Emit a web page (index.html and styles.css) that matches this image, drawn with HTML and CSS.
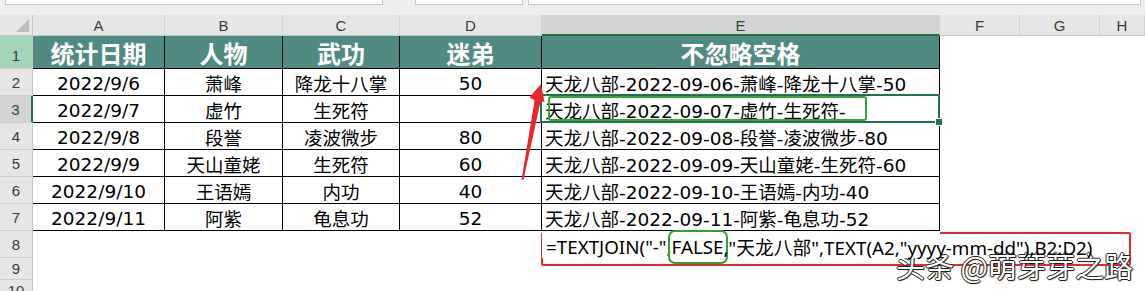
FILE: index.html
```html
<!DOCTYPE html>
<html lang="zh-CN">
<head>
<meta charset="utf-8">
<title>TEXTJOIN</title>
<link rel="stylesheet" href="styles.css">
</head>
<body>
<div class="screen">
  <div class="fbar">
    <div class="fbox namebox"></div>
    <div class="fbox fxbox"></div>
    <div class="fbox inputbox"></div>
  </div>
  <div class="sheet">
    <div class="corner"><span class="tri"></span></div>
    <div class="ch">A</div><div class="ch">B</div><div class="ch">C</div><div class="ch">D</div><div class="ch ch-sel">E</div><div class="ch">F</div><div class="ch">G</div><div class="ch">H</div>

    <div class="rh rh-hl">1</div>
    <div class="c hd">统计日期</div><div class="c hd">人物</div><div class="c hd">武功</div><div class="c hd">迷弟</div><div class="c hd">不忽略空格</div><div class="e"></div><div class="e"></div><div class="e"></div>

    <div class="rh">2</div>
    <div class="c">2022/9/6</div><div class="c">萧峰</div><div class="c">降龙十八掌</div><div class="c">50</div><div class="c l">天龙八部-2022-09-06-萧峰-降龙十八掌-50</div><div class="e"></div><div class="e"></div><div class="e"></div>

    <div class="rh rh-sel">3</div>
    <div class="c">2022/9/7</div><div class="c">虚竹</div><div class="c">生死符</div><div class="c"></div><div class="c l sel">天龙八部-2022-09-07-虚竹-生死符-</div><div class="e"></div><div class="e"></div><div class="e"></div>

    <div class="rh">4</div>
    <div class="c">2022/9/8</div><div class="c">段誉</div><div class="c">凌波微步</div><div class="c">80</div><div class="c l">天龙八部-2022-09-08-段誉-凌波微步-80</div><div class="e"></div><div class="e"></div><div class="e"></div>

    <div class="rh">5</div>
    <div class="c">2022/9/9</div><div class="c">天山童姥</div><div class="c">生死符</div><div class="c">60</div><div class="c l">天龙八部-2022-09-09-天山童姥-生死符-60</div><div class="e"></div><div class="e"></div><div class="e"></div>

    <div class="rh">6</div>
    <div class="c">2022/9/10</div><div class="c">王语嫣</div><div class="c">内功</div><div class="c">40</div><div class="c l">天龙八部-2022-09-10-王语嫣-内功-40</div><div class="e"></div><div class="e"></div><div class="e"></div>

    <div class="rh">7</div>
    <div class="c">2022/9/11</div><div class="c">阿紫</div><div class="c">龟息功</div><div class="c">52</div><div class="c l">天龙八部-2022-09-11-阿紫-龟息功-52</div><div class="e"></div><div class="e"></div><div class="e"></div>

    <div class="rh">8</div>
    <div class="e"></div><div class="e"></div><div class="e"></div><div class="e"></div><div class="e formula">=TEXTJOIN("-",<span class="mark">FALSE</span>,"天龙八部",TEXT(A2,"yyyy-mm-dd"),B2:D2)</div><div class="e"></div><div class="e"></div><div class="e"></div>

    <div class="rh rh-short">9</div>
    <div class="e"></div><div class="e"></div><div class="e"></div><div class="e"></div><div class="e"></div><div class="e"></div><div class="e"></div><div class="e"></div>

    <div class="rh rh-cut">10</div>
    <div class="e"></div><div class="e"></div><div class="e"></div><div class="e"></div><div class="e"></div><div class="e"></div><div class="e"></div><div class="e"></div>
  </div>

  <div class="note-green"></div>
  <div class="note-red"></div>
  <svg class="arrow" width="1145" height="291" viewBox="0 0 1145 291" aria-hidden="true">
    <polygon points="541,84 544.5,102 540.6,101.2 523.4,180 521.6,179.5 534.6,100 529.5,97.5" fill="#e8262b"/>
  </svg>
  <div class="watermark">头条 @萌芽芽之路</div>
</div>
</body>
</html>
```

FILE: styles.css
```css
* {
  box-sizing: border-box;
  margin: 0;
  padding: 0;
}

body {
  margin: 0;
  background: #ffffff;
  font-family: "DejaVu Sans", "Noto Sans CJK SC", sans-serif;
}

.screen {
  position: relative;
  width: 1145px;
  height: 291px;
  overflow: hidden;
  background: #ffffff;
}

/* formula bar strip */
.fbar {
  height: 15px;
  background: #eeeeee;
  display: flex;
  align-items: flex-start;
}

.fbox {
  height: 5px;
  background: #ffffff;
  border: 1px solid #c6c6c6;
  border-top: none;
}

.namebox {
  margin-left: 5px;
  width: 378px;
}

.fxbox {
  margin-left: 32px;
  width: 108px;
}

.inputbox {
  margin-left: 5px;
  width: 613px;
}

/* sheet grid */
.sheet {
  display: grid;
  grid-template-columns: 33px 132px 118px 117px 142px 398px 80px 80px 1fr;
  grid-template-rows: 21px 33px repeat(7, 27px) 22px 11px;
}

.corner {
  position: relative;
  background: #e6e6e6;
  border-right: 1px solid #c6c6c6;
  border-bottom: 1px solid #c6c6c6;
}

.tri {
  position: absolute;
  right: 3px;
  bottom: 3px;
  width: 0;
  height: 0;
  border-left: 13px solid transparent;
  border-bottom: 13px solid #bdbdbd;
}

.ch {
  background: #e6e6e6;
  border-right: 1px solid #d2d2d2;
  border-bottom: 1px solid #c6c6c6;
  display: flex;
  align-items: center;
  justify-content: center;
  font-family: "Liberation Sans", "Noto Sans", sans-serif;
  font-size: 15px;
  color: #3a3a3a;
  padding-top: 1px;
}

.ch-sel {
  background: #d3d3d3;
  border-bottom: 2px solid #217346;
  color: #1e4f35;
}

.rh {
  background: #e6e6e6;
  border-right: 1px solid #c6c6c6;
  border-bottom: 1px solid #cfcfcf;
  display: flex;
  align-items: flex-end;
  justify-content: center;
  font-family: "Liberation Sans", "Noto Sans", sans-serif;
  font-size: 15px;
  line-height: 17px;
  color: #3a3a3a;
  padding-bottom: 4px;
  overflow: hidden;
}

.rh-short {
  align-items: center;
  padding-bottom: 0;
}

.rh-cut {
  align-items: flex-start;
  padding-bottom: 0;
  padding-top: 2px;
  border-bottom: none;
}

.rh-hl {
  background: #a3d6b8;
}

.rh-sel {
  background: #d3d3d3;
  border-right: 2px solid #217346;
  color: #1e4f35;
}

/* data cells */
.c {
  border-right: 1px solid #000000;
  border-bottom: 1px solid #000000;
  display: flex;
  align-items: center;
  justify-content: center;
  font-size: 18.5px;
  color: #000000;
  white-space: nowrap;
  padding-top: 2px;
}

.c.l {
  justify-content: flex-start;
  padding-left: 3px;
}

.c.hd {
  background: #4f8b83;
  color: #ffffff;
  font-family: "Noto Sans CJK SC", sans-serif;
  font-weight: 700;
  font-size: 24px;
  align-items: flex-end;
  padding-top: 0;
  padding-bottom: 0;
  line-height: 30px;
}

.e {
  background: #ffffff;
  white-space: nowrap;
}

.sel {
  position: relative;
}

.sel::before {
  content: "";
  position: absolute;
  left: -2px;
  top: -2px;
  right: -1px;
  bottom: -1px;
  border: 2px solid #217346;
}

.sel::after {
  content: "";
  position: absolute;
  right: -4px;
  bottom: -4px;
  width: 6px;
  height: 6px;
  background: #217346;
  border: 1px solid #ffffff;
}

.formula {
  font-family: "Noto Sans", "Noto Sans CJK SC", sans-serif;
  font-size: 18.8px;
  color: #000000;
  padding-left: 4px;
  display: flex;
  align-items: center;
  padding-top: 5px;
  position: relative;
  z-index: 1;
}

.mark {
  outline: 2px solid #2fa137;
  outline-offset: 2px;
  border-radius: 3px;
}

/* annotations */
.note-green {
  position: absolute;
  left: 548px;
  top: 96px;
  width: 319px;
  height: 25px;
  border: 2px solid #35a43c;
  border-radius: 3px;
}

.note-red {
  position: absolute;
  left: 541px;
  top: 232px;
  width: 590px;
  height: 34px;
  border: 2px solid #e52b2f;
  border-radius: 2px;
}

.arrow {
  position: absolute;
  left: 0;
  top: 0;
  pointer-events: none;
}

.watermark {
  position: absolute;
  left: 896px;
  top: 245px;
  font-family: "Noto Sans CJK SC", sans-serif;
  font-size: 29px;
  line-height: 40px;
  color: #ffffff;
  white-space: nowrap;
  text-shadow: 1px 0 0 #222, -1px 0 0 #222, 0 1px 0 #222, 0 -1px 0 #222, 1px 1px 1px #444;
}
```
